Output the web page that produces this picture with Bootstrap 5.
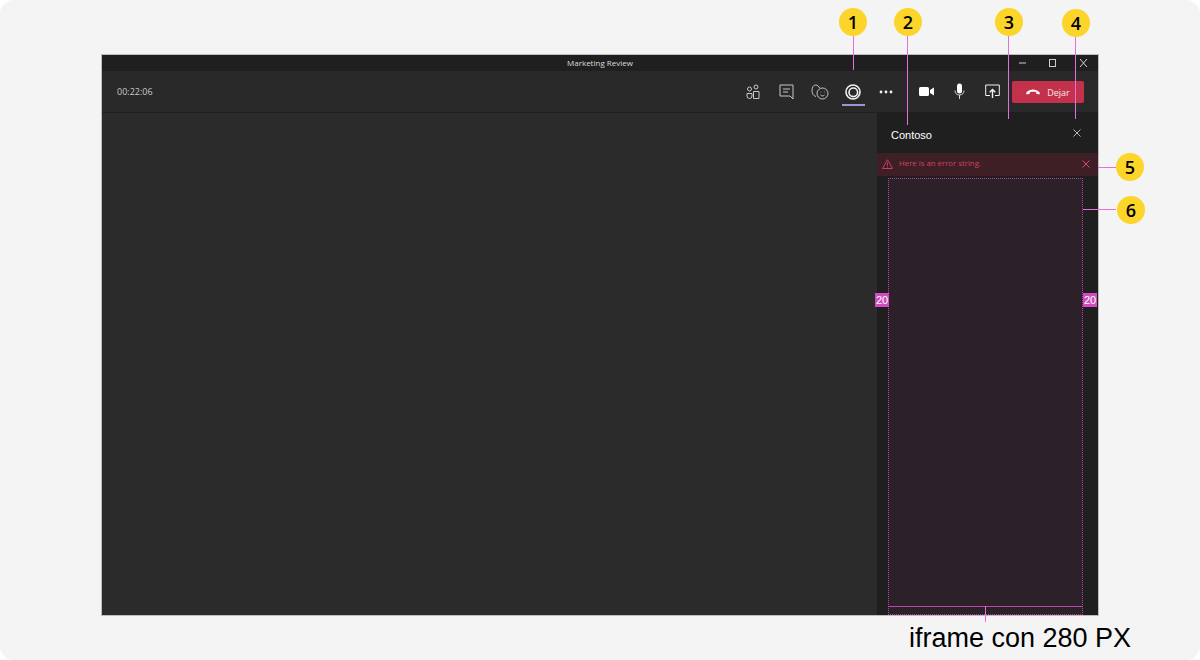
<!DOCTYPE html>
<html lang="es">
<head>
    <meta charset="UTF-8">
    <title>Marketing Review</title>
    <link href="https://cdn.jsdelivr.net/npm/bootstrap@5.3.0/dist/css/bootstrap.min.css" rel="stylesheet">
    <style>
        html, body { margin: 0; height: 660px; background: #fff; overflow: hidden; }
        body { font-family: "Open Sans", "Liberation Sans", sans-serif; }
        .sheet { position: relative; width: 1200px; height: 660px; padding: 55px 102px 45px; background: #f4f4f4; border-radius: 14px; }
        .meeting { height: 560px; background: #292929; box-shadow: 0 0 0 1px #bdbdbd; }
        .title-bar { height: 16px; background: #1f1f1f; color: #dcdcdc; font-size: 8px; position: relative; }
        .win-btns { position: absolute; right: -1px; top: 0; height: 16px; }
        .win-btns svg { width: 31px; height: 16px; display: block; }
        .call-bar { height: 42px; background: #292929; border-bottom: 1px solid #1f1f1f; padding: 0 14px 0 15px; }
        .timer { color: #c8c8c8; font-size: 9px; }
        .tool-ico { width: 33.3px; height: 42px; display: flex; align-items: center; justify-content: center; position: relative; }
        .tool-ico.on::after { content: ""; position: absolute; left: 6px; right: 5px; bottom: 7px; height: 2px; background: #9a97d6; }
        .tool-ico.last-tab { margin-right: 7px; }
        .tool-ico.media { width: 33px; }
        .leave-btn { width: 72px; height: 22px; background: #c4314b; border-radius: 2px; color: #fbeaed; font-size: 9px; gap: 7px; margin-left: 3px; padding-top: 1px; }
        .leave-btn span { padding-top: 2px; }
        .stage { background: #2b2b2b; }
        .side-panel { width: 221px; background: #1f1f1f; }
        .panel-head { height: 40px; padding: 4px 17px 0 14px; color: #fff; font-size: 11px; font-family: "Liberation Sans", sans-serif; }
        .err-row { height: 23px; background: #3e1f25; color: #cc4560; font-size: 7.8px; padding: 0 8px 2px 5px; gap: 6px; }
        .frame-wrap { padding: 2px 15px 0 11px; }
        .frame-box { background: #2d2129; outline: 1px dotted #b63fa8; outline-offset: -1px; position: relative; }
        .frame-rule { position: absolute; left: 0; right: 0; bottom: 8px; height: 1px; background: #c043b0; }
        .pin { position: absolute; width: 28px; height: 28px; border-radius: 50%; background: #fcd52a; color: #000; font: 600 18px/28px "Open Sans", sans-serif; text-align: center; }
        .lead-line { position: absolute; background: #e66fdc; }
        .px-tag { position: absolute; top: 293px; width: 14px; height: 14px; background: #d14cc0; color: #fff; font: 11px/14px "Liberation Sans", sans-serif; text-align: center; }
        .size-label { position: absolute; left: 909px; top: 622px; font: 27px/32px "Liberation Sans", sans-serif; color: #000; white-space: nowrap; }
    </style>
</head>
<body>
    <div class="sheet">
        <div class="meeting d-flex flex-column">
            <div class="title-bar d-flex align-items-center justify-content-center">
                <span>Marketing Review</span>
                <div class="win-btns d-flex">
                    <svg viewBox="0 0 31 16"><path d="M13 8h7" stroke="#cfcfcf" stroke-width="1"/></svg>
                    <svg viewBox="0 0 31 16"><rect x="12.5" y="4.5" width="6" height="7" fill="none" stroke="#cfcfcf"/></svg>
                    <svg viewBox="0 0 31 16"><path d="M12 4l7 8M19 4l-7 8" stroke="#cfcfcf" fill="none"/></svg>
                </div>
            </div>
            <div class="call-bar d-flex align-items-center">
                <span class="timer">00:22:06</span>
                <div class="d-flex align-items-center ms-auto">
                    <div class="tool-ico">
                        <svg width="14" height="16" viewBox="0 0 14 16" fill="none" stroke="#c8c8c8"><circle cx="3.5" cy="5" r="2"/><circle cx="10" cy="3" r="2"/><path d="M1 9.5h5v2.5a2.5 2.5 0 0 1-5 0zM7.5 7.5h5.5v7h-5.5z"/></svg>
                    </div>
                    <div class="tool-ico">
                        <svg width="15" height="16" viewBox="0 0 15 16" fill="none" stroke="#c8c8c8"><path d="M1 1h13v14l-3-3H1z"/><path d="M4 5h7M4 8h5"/></svg>
                    </div>
                    <div class="tool-ico">
                        <svg width="18" height="16" viewBox="0 0 18 16" fill="none" stroke="#c8c8c8"><path d="M5 12.5C2.500 12 1 9.500 1 6.500S2.500 1 4.500 1 8 2.500 8.500 4"/><circle cx="11.500" cy="9.500" r="5.500"/><path d="M9.500 11c1 1.200 3 1.200 4 0"/><path d="M9.800 8h.5M13 8h.5"/></svg>
                    </div>
                    <div class="tool-ico on">
                        <svg width="16" height="16" viewBox="0 0 16 16" fill="none" stroke="#f2f2f2"><circle cx="8" cy="8" r="7" stroke-width="1.600"/><circle cx="8.300" cy="8.300" r="4.300" stroke-width="1.600"/></svg>
                    </div>
                    <div class="tool-ico last-tab">
                        <svg width="14" height="4" viewBox="0 0 14 4" fill="#f2f2f2"><circle cx="2" cy="2" r="1.400"/><circle cx="7" cy="2" r="1.400"/><circle cx="12" cy="2" r="1.400"/></svg>
                    </div>
                    <div class="tool-ico media">
                        <svg width="15" height="11" viewBox="0 0 15 11" fill="#fff"><rect x="0" y="1" width="10" height="9" rx="1.500"/><path d="M11 4l4-2.500v8L11 7z"/></svg>
                    </div>
                    <div class="tool-ico media">
                        <svg width="11" height="17" viewBox="0 0 11 17"><rect x="3" y="0.500" width="5" height="10" rx="2.500" fill="#fff"/><path d="M1 7.500c0 3 2 4.500 4.500 4.500S10 10.500 10 7.500M5.500 12v4" fill="none" stroke="#d8d8d8"/></svg>
                    </div>
                    <div class="tool-ico media">
                        <svg width="15" height="15" viewBox="0 0 15 15" fill="none" stroke="#f2f2f2"><path d="M5 11.500H.7V1h13.600v10.500H10"/><path d="M7.500 14V5.500M4.700 8.200l2.800-2.800 2.800 2.800" stroke-width="1.400"/></svg>
                    </div>
                    <div class="leave-btn d-flex align-items-center justify-content-center">
                        <svg width="14" height="6" viewBox="0 0 14 6" fill="#fff"><path d="M0 4C2 1 5 .5 7 .5S12 1 14 4l-.8 1.500-3-.8V3C9 2.500 5 2.500 3.800 3v1.700l-3 .8z"/></svg>
                        <span>Dejar</span>
                    </div>
                </div>
            </div>
            <div class="d-flex flex-grow-1">
                <div class="stage flex-grow-1"></div>
                <div class="side-panel d-flex flex-column">
                    <div class="panel-head d-flex align-items-center justify-content-between">
                        <span>Contoso</span>
                        <svg width="8" height="8" viewBox="0 0 8 8" stroke="#b5b5b5" class="mb-1"><path d="M.5.500l7 7M7.500.500l-7 7"/></svg>
                    </div>
                    <div class="err-row d-flex align-items-center">
                        <svg width="11" height="10" viewBox="0 0 11 10" fill="none" stroke="#c4405a"><path d="M5.500.800L10.500 9.500H.5z"/><path d="M5.500 3.500v3.300M5.500 7.500v1"/></svg>
                        <span class="flex-grow-1">Here is an error string.</span>
                        <svg width="8" height="8" viewBox="0 0 8 8" stroke="#d4506a"><path d="M.5.500l7 7M7.500.500l-7 7"/></svg>
                    </div>
                    <div class="frame-wrap flex-grow-1 d-flex">
                        <div class="frame-box flex-grow-1"><div class="frame-rule"></div></div>
                    </div>
                </div>
            </div>
        </div>

        <i class="lead-line" style="left:853px;top:36px;width:1px;height:34px"></i>
        <i class="lead-line" style="left:907px;top:36px;width:1px;height:89px"></i>
        <i class="lead-line" style="left:1008px;top:36px;width:1px;height:83px"></i>
        <i class="lead-line" style="left:1075px;top:36px;width:1px;height:83px"></i>
        <i class="lead-line" style="left:1098px;top:167px;width:18px;height:1px"></i>
        <i class="lead-line" style="left:1083px;top:209px;width:33px;height:1px"></i>
        <i class="lead-line" style="left:985px;top:606px;width:1px;height:16px"></i>

        <div class="pin" style="left:839px;top:8px">1</div>
        <div class="pin" style="left:894px;top:8px">2</div>
        <div class="pin" style="left:995px;top:8px">3</div>
        <div class="pin" style="left:1062px;top:9px">4</div>
        <div class="pin" style="left:1116px;top:153px">5</div>
        <div class="pin" style="left:1117px;top:196px">6</div>

        <div class="px-tag" style="left:875px">20</div>
        <div class="px-tag" style="left:1083px">20</div>
        <div class="size-label">iframe con 280 PX</div>
    </div>
    <script src="https://cdn.jsdelivr.net/npm/bootstrap@5.3.0/dist/js/bootstrap.bundle.min.js"></script>
</body>
</html>
